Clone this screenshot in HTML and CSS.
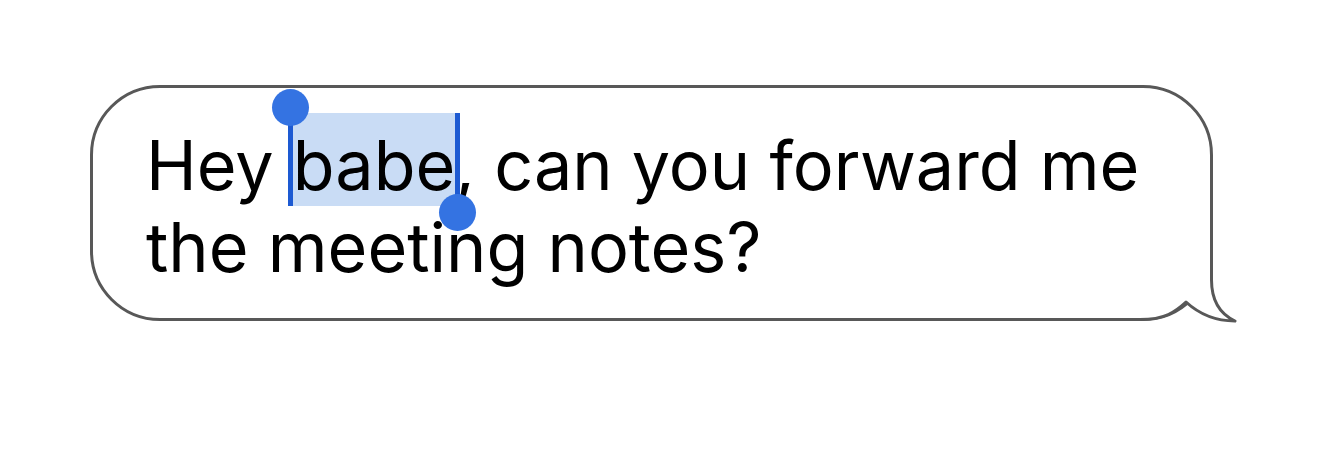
FILE: index.html
```html
<!DOCTYPE html>
<html lang="en">
<head>
<meta charset="utf-8">
<title>Message bubble</title>
<link rel="stylesheet" href="styles.css">
</head>
<body>
<main class="stage">
  <div class="bubble">
    <p class="message">Hey <span class="selected">babe<span class="handle handle-start"></span><span class="handle handle-end"></span></span>, can you forward me the meeting notes?</p>
    <svg class="tail" width="120" height="90" viewBox="0 0 120 90" aria-hidden="true">
      <path class="tail-fill" d="M81.5 8 L81.5 42 C81.5 62 90 76 105 83 C85 83 68 75 56 64 C45 74 35 81.5 10 81.5 L10 8 Z"/>
      <path class="tail-stroke" d="M81.5 8 L81.5 42 C81.5 62 90 76 105 83 C85 83 68 75 56 64 C45 74 35 81.5 10 81.5"/>
    </svg>
  </div>
</main>
</body>
</html>
```
FILE: styles.css
```css
html, body {
  margin: 0;
  padding: 0;
  background: #ffffff;
}

.stage {
  width: 1342px;
  height: 454px;
  box-sizing: border-box;
  padding: 85px 0 0 90px;
}

.bubble {
  position: relative;
  width: 1123px;
  height: 236px;
  box-sizing: border-box;
  border: 3px solid #585858;
  border-radius: 70px;
  padding: 36px 30px 0 53px;
  background: #ffffff;
}

.message {
  margin: 0;
  font-family: "Inter", "Liberation Sans", Arial, sans-serif;
  font-size: 68.3px;
  letter-spacing: 0;
  line-height: 82px;
  color: #000000;
}

.selected {
  position: relative;
  background: #c9dcf5;
  padding-top: 11px;
}

.handle {
  position: absolute;
  width: 5px;
  background: #1d5ad2;
}

.handle::before {
  content: "";
  position: absolute;
  width: 37px;
  height: 37px;
  border-radius: 50%;
  background: #3473e2;
  left: -16px;
}

.handle-start {
  left: -5px;
  top: -6px;
  bottom: 0;
}

.handle-start::before {
  top: -18px;
}

.handle-end {
  right: -5px;
  top: 0;
  bottom: -7px;
}

.handle-end::before {
  bottom: -18px;
}

.tail {
  position: absolute;
  right: -40px;
  bottom: -10px;
  overflow: visible;
}

.tail-fill {
  fill: #ffffff;
  stroke: none;
}

.tail-stroke {
  fill: none;
  stroke: #585858;
  stroke-width: 3;
  stroke-linejoin: round;
}
```
